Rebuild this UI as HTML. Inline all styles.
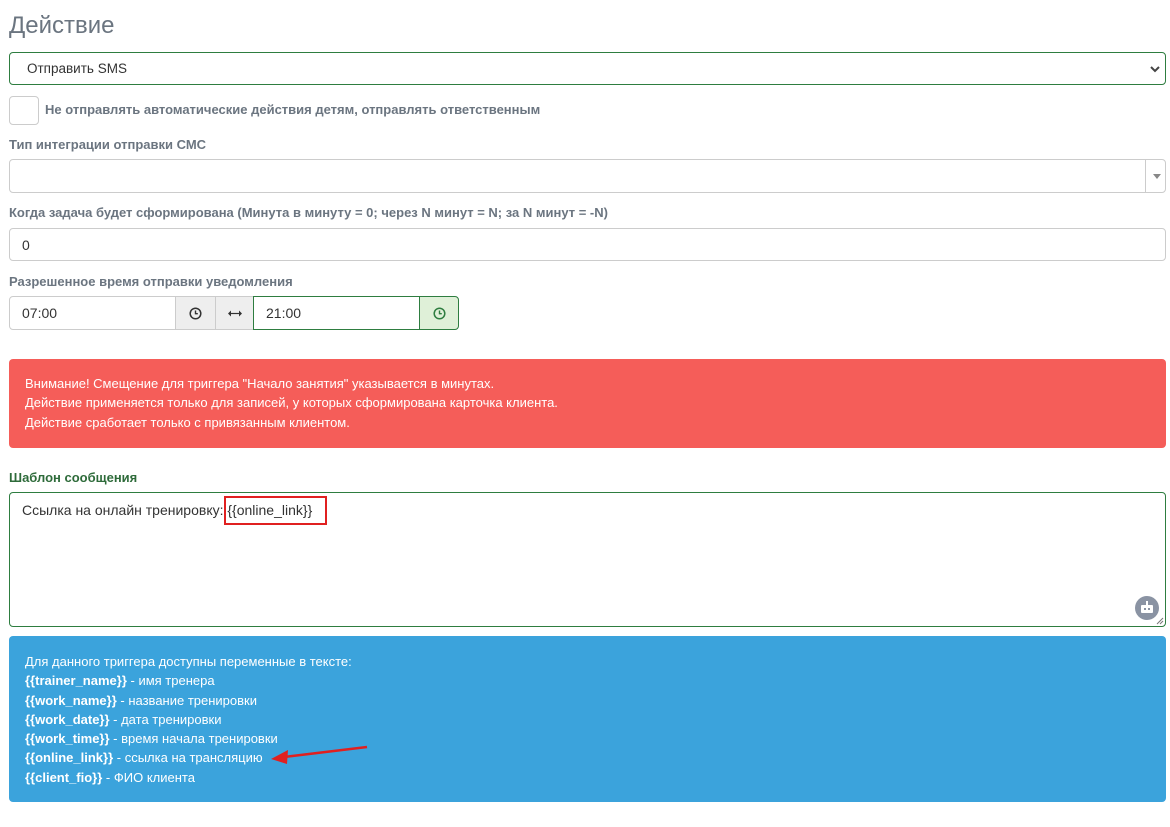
<!DOCTYPE html>
<html><head><meta charset="utf-8">
<style>
*{box-sizing:border-box;margin:0;padding:0}
body{width:1170px;height:827px;background:#fff;font-family:"Liberation Sans",Arial,sans-serif;color:#333;position:relative;overflow:hidden}
.abs{position:absolute}
.lbl{position:absolute;left:9px;font-size:13px;font-weight:bold;color:#6b7580}
.box{position:absolute;border:1px solid #ccc;border-radius:4px;background:#fff;font-size:14px}
.al{position:absolute;left:9px;width:1157px;border-radius:4px;color:#fff;font-size:13px;line-height:19.3px;padding-left:16px}
.al b{font-weight:bold}
</style></head><body>
<div class="abs" style="left:9px;top:12px;font-size:24px;color:#6b7580">Действие</div>

<div class="box" style="left:9px;top:52px;width:1157px;height:33px;border-color:#2e7d40">
 <span class="abs" style="left:17px;top:8px;font-size:13.5px">Отправить SMS</span>
 <svg class="abs" style="right:5px;top:12px" width="10" height="8" viewBox="0 0 10 8"><path d="M1 2l4 4 4-4" stroke="#444" stroke-width="2" fill="none"/></svg>
</div>

<div class="box" style="left:9px;top:96px;width:30px;height:29px;border-radius:4px"></div>
<div class="lbl" style="left:45px;top:102px">Не отправлять автоматические действия детям, отправлять ответственным</div>

<div class="lbl" style="top:137px">Тип интеграции отправки СМС</div>
<div class="box" style="left:9px;top:159px;width:1157px;height:34px">
 <div class="abs" style="left:1135px;top:0;width:1px;height:32px;background:#ccc"></div>
 <div class="abs" style="left:1143px;top:14px;width:0;height:0;border-left:4px solid transparent;border-right:4px solid transparent;border-top:5px solid #888"></div>
</div>

<div class="lbl" style="top:205px">Когда задача будет сформирована (Минута в минуту = 0; через N минут = N; за N минут = -N)</div>
<div class="box" style="left:9px;top:228px;width:1157px;height:33px"><span class="abs" style="left:12px;top:8px">0</span></div>

<div class="lbl" style="top:274px">Разрешенное время отправки уведомления</div>
<div class="box" style="left:9px;top:296px;width:167px;height:34px;border-radius:4px 0 0 4px"><span class="abs" style="left:12px;top:8px">07:00</span></div>
<div class="box" style="left:175px;top:296px;width:41px;height:34px;border-radius:0;background:#eee">
 <svg class="abs" style="left:13px;top:10px" width="13" height="13" viewBox="0 0 13 13"><circle cx="6.5" cy="6.5" r="5.3" stroke="#333" stroke-width="1.5" fill="none"/><path d="M6.5 3.5v3.2h2.3" stroke="#333" stroke-width="1.4" fill="none"/></svg>
</div>
<div class="box" style="left:215px;top:296px;width:39px;height:34px;border-radius:0;background:#eee">
 <svg class="abs" style="left:12px;top:13px" width="14" height="7" viewBox="0 0 14 7"><path d="M2 3.5h10" stroke="#333" stroke-width="1.2"/><path d="M0 3.5l3-3v6zM14 3.5l-3-3v6z" fill="#333"/></svg>
</div>
<div class="box" style="left:253px;top:296px;width:167px;height:34px;border-radius:0;border-color:#2e7d40"><span class="abs" style="left:12px;top:8px">21:00</span></div>
<div class="box" style="left:419px;top:296px;width:40px;height:34px;border-radius:0 4px 4px 0;border-color:#2e7d40;background:#dff0d8">
 <svg class="abs" style="left:13px;top:10px" width="13" height="13" viewBox="0 0 13 13"><circle cx="6.5" cy="6.5" r="5.3" stroke="#2e7d40" stroke-width="1.5" fill="none"/><path d="M6.5 3.5v3.2h2.3" stroke="#2e7d40" stroke-width="1.4" fill="none"/></svg>
</div>

<div class="al" style="top:359px;height:89px;background:#f55d59;padding-top:15px">Внимание! Смещение для триггера "Начало занятия" указывается в минутах.<br>Действие применяется только для записей, у которых сформирована карточка клиента.<br>Действие сработает только с привязанным клиентом.</div>

<div class="lbl" style="top:470px;color:#2e6b3a">Шаблон сообщения</div>
<div class="box" style="left:9px;top:492px;width:1157px;height:135px;border-color:#2e7d40">
 <span class="abs" style="left:12px;top:9px">Ссылка на онлайн тренировку: {{online_link}}</span>
 <div class="abs" style="left:1125px;top:103px;width:24px;height:24px;border-radius:50%;background:#8a93a3">
  <div class="abs" style="left:6px;top:9px;width:12px;height:8px;background:#fff;border-radius:1px"></div>
  <div class="abs" style="left:11px;top:5px;width:2px;height:4px;background:#fff"></div>
  <div class="abs" style="left:9px;top:12px;width:2px;height:2px;background:#8a93a3"></div>
  <div class="abs" style="left:13px;top:12px;width:2px;height:2px;background:#8a93a3"></div>
 </div>
 <svg class="abs" style="right:1px;bottom:1px" width="8" height="8" viewBox="0 0 8 8"><path d="M1 7L7 1M4 7L7 4" stroke="#777" stroke-width="1"/></svg>
</div>
<div class="abs" style="left:224px;top:496px;width:103px;height:29px;border:2px solid #e02020"></div>

<div class="al" style="top:636px;height:166px;background:#3ba3dc;padding-top:16px">Для данного триггера доступны переменные в тексте:<br><b>{{trainer_name}}</b> - имя тренера<br><b>{{work_name}}</b> - название тренировки<br><b>{{work_date}}</b> - дата тренировки<br><b>{{work_time}}</b> - время начала тренировки<br><b>{{online_link}}</b> - ссылка на трансляцию<br><b>{{client_fio}}</b> - ФИО клиента</div>
<svg class="abs" style="left:268px;top:742px" width="104" height="22" viewBox="0 0 104 22"><path d="M99 5L16 15" stroke="#e02020" stroke-width="2.5"/><path d="M3 17L20 8L19 22z" fill="#e02020"/></svg>
</body></html>
